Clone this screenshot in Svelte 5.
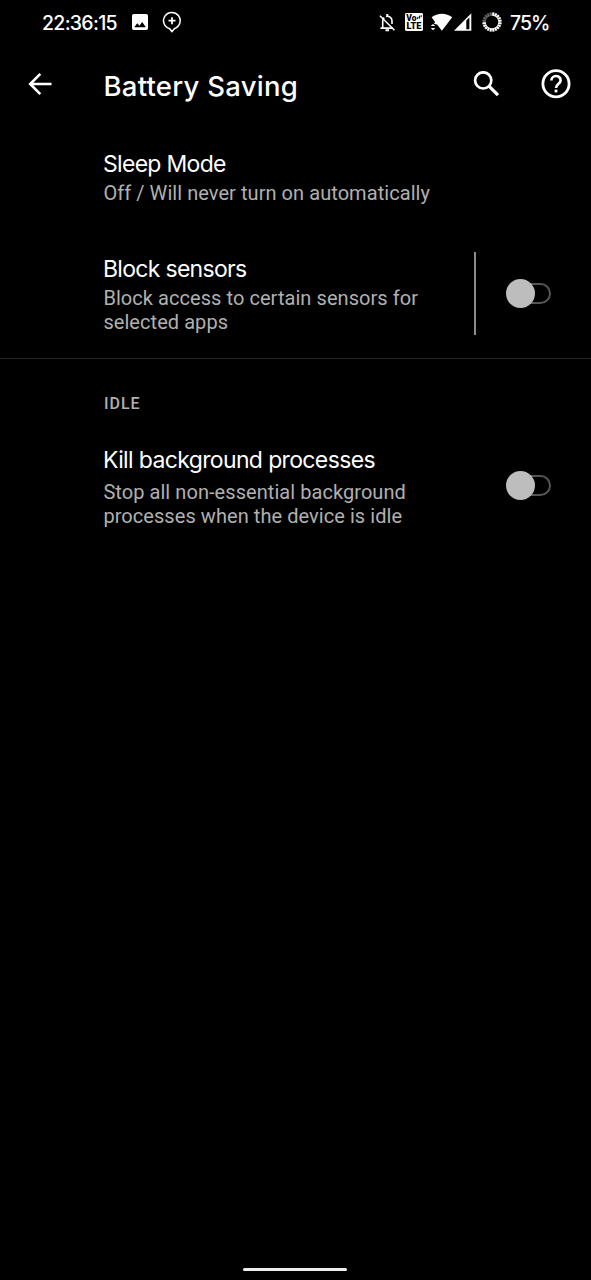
<script>
  let blockSensors = $state(false);
  let killProcesses = $state(false);

  const ticks = Array.from({ length: 20 }, (_, i) => ({ angle: i * 18 + 9, dim: i >= 15 }));
</script>

{#snippet toggle(on, label, flip)}
  <button class="switch" class:on role="switch" aria-checked={on} aria-label={label} onclick={flip}>
    <span class="track"></span>
    <span class="thumb"></span>
  </button>
{/snippet}

<div class="screen">
  <header class="status">
    <span class="clock">22:36:15</span>
    <svg class="photo" width="16" height="16" viewBox="0 0 16 16">
      <path fill="#fff" fill-rule="evenodd" d="M1.8 0h12.4Q16 0 16 1.8v12.4Q16 16 14.2 16H1.8Q0 16 0 14.2V1.8Q0 0 1.8 0ZM2.2 13.2h11.7L10.2 8.1 7.4 11.7 5.3 9.2Z" />
    </svg>
    <svg class="pin" width="20" height="22" viewBox="0 0 20 22" fill="none" stroke="#fff">
      <path stroke-width="1.5" d="M7.6 17.7A8.3 8.3 0 1 1 12.7 17.5L9.9 20.5Z" />
      <path stroke-width="1.8" d="M10 6.2v7M6.5 9.7h7" />
    </svg>
    <span class="gap"></span>
    <svg class="bell" width="17" height="19" viewBox="0 0 17 19" fill="none" stroke="#fff">
      <path stroke-width="1.6" d="M1.5 15.1h12.4M3.7 15V8.2Q3.7 5.9 5.2 4.6M7 3.4Q8.3 3 9.6 3.4 13 4.4 13 8.2V11" />
      <path stroke-width="2" d="M8.3 1v2.5M6.5 17.3h3.6" />
      <path stroke-width="1.5" d="M.9 2.7 15.5 17.2" />
    </svg>
    <svg class="volte" width="18" height="18" viewBox="0 0 18 18">
      <rect width="18" height="18" rx="1.4" fill="#fff" />
      <text x="1.3" y="8" font-size="9" textLength="10.2" lengthAdjust="spacingAndGlyphs">Vo</text>
      <text x="1.5" y="16.2" font-size="9" textLength="15" lengthAdjust="spacingAndGlyphs">LTE</text>
      <path d="M12.3 6l.8-2.2M14.1 5.8l.7-3.2M15.9 4.3l.5-2" stroke="#000" stroke-width="1" />
    </svg>
    <svg class="wifi" width="23" height="19" viewBox="0 0 23 19" fill="#fff">
      <path d="M1.6 4.2Q6.2.7 11.9.7T22.2 4.2L11.9 17.8 7.1 11.6Q5 10.8 3.9 11.1 5 10 4.9 8.7Z" />
      <path d="M.8 13.1 3 10.9l2.2 2.2ZM.8 15 3 17.2 5.2 15Z" />
    </svg>
    <svg class="signal" width="18" height="18" viewBox="0 0 18 18">
      <path fill="#fff" fill-rule="evenodd" d="M0 17.7 17.3.3v17.4ZM12.3 7.6v8.6h3.1V4.5Z" />
    </svg>
    <svg class="ring" width="20" height="20" viewBox="-10 -10 20 20">
      {#each ticks as tick}
        <rect x="-1.05" y="-9.7" width="2.1" height="3.5" fill={tick.dim ? '#666' : '#fff'} transform="rotate({tick.angle})" />
      {/each}
    </svg>
    <span class="percent">75%</span>
  </header>

  <nav class="bar">
    <svg class="back" width="24" height="24" viewBox="0 0 24 24" fill="none" stroke="#fff" stroke-width="2.6">
      <path d="M23.5 12H2.5M12.3 1.9 2.2 12l10.1 10.1" />
    </svg>
    <h1>Battery Saving</h1>
    <svg class="search" width="27" height="27" viewBox="0 0 27 27" fill="none" stroke="#fff">
      <circle cx="10.2" cy="9.4" r="8.1" stroke-width="2.7" />
      <path stroke-width="3.3" d="M15.7 14.9 25 24.2" />
    </svg>
    <svg class="help" width="30" height="30" viewBox="0 0 30 30" fill="none" stroke="#fff">
      <circle cx="15" cy="14.7" r="13.1" stroke-width="2.8" />
      <path stroke-width="2.7" d="M10.4 11.6C10.4 5.5 19.6 5.5 19.6 11.5 19.6 14.7 15 14.8 15 19" />
      <path stroke-width="2.8" d="M15 20.6v2.8" />
    </svg>
  </nav>

  <main>
    <section class="row sleep">
      <div class="copy">
        <h2>Sleep Mode</h2>
        <p>Off / Will never turn on automatically</p>
      </div>
    </section>
    <section class="row sensors">
      <div class="copy">
        <h2>Block sensors</h2>
        <p>Block access to certain sensors for<br />selected apps</p>
      </div>
      <div class="rule"></div>
      {@render toggle(blockSensors, 'Block sensors', () => (blockSensors = !blockSensors))}
    </section>
    <h3>IDLE</h3>
    <section class="row kill">
      <div class="copy">
        <h2>Kill background processes</h2>
        <p>Stop all non-essential background<br />processes when the device is idle</p>
      </div>
      {@render toggle(killProcesses, 'Kill background processes', () => (killProcesses = !killProcesses))}
    </section>
  </main>

  <footer><span class="handle"></span></footer>
</div>

<style>
  :global(body) { margin: 0; background: #000; }
  .screen {
    box-sizing: border-box;
    width: 100%;
    height: 1280px;
    display: flex;
    flex-direction: column;
    overflow: hidden;
    background: #000;
    color: #fff;
    font-family: Roboto, sans-serif;
  }
  h1, h2, h3, p { margin: 0; }
  svg { display: block; flex: none; }
  .status {
    height: 44px;
    display: flex;
    align-items: center;
    padding: 0 41px 0 42px;
    font-family: Inter, sans-serif;
    font-size: 19.5px;
    font-weight: 500;
    white-space: nowrap;
  }
  .clock, .percent { padding-top: 2px; }
  .clock { width: 76px; letter-spacing: -0.7px; }
  .photo { margin-left: 14px; }
  .pin { margin-left: 14px; }
  .gap { flex: 1; }
  .bell { margin-right: 9px; }
  .volte { margin-right: 7px; }
  .volte text { font-family: Roboto, sans-serif; font-weight: 900; letter-spacing: 0; fill: #000; }
  .wifi { margin-right: 1px; }
  .signal { margin-right: 10px; }
  .ring { margin-right: 8px; }
  .percent { width: 40px; letter-spacing: -1px; }

  .bar { height: 80px; display: flex; align-items: center; padding: 0 20px 0 28px; }
  h1 {
    flex: 1;
    margin-left: 51.5px;
    padding-top: 3px;
    font: 500 27.5px/36px Inter, sans-serif;
    letter-spacing: 0.25px;
    white-space: nowrap;
  }
  .search { margin-right: 41px; }

  main { flex: 1; }
  .row { display: flex; padding: 0 40px 0 103px; }
  .copy { flex: 1; white-space: nowrap; }
  h2 { font: 400 23px/30px Inter, sans-serif; letter-spacing: -0.7px; }
  p { margin-top: 2px; padding-left: 0.4px; font-size: 20px; line-height: 24px; letter-spacing: 0.06px; color: #b0b0b0; }
  .sleep { height: 105px; padding-top: 25px; }
  .sensors { height: 104px; border-bottom: 1px solid #262626; }
  .rule { width: 2px; height: 83px; background: #8c8c8c; margin: -2px 30px 0 0; }
  h3 { padding: 34px 0 0 104px; font-size: 16px; line-height: 22px; font-weight: 500; letter-spacing: 1px; color: #b0b0b0; }
  .kill { padding-top: 30px; }
  .kill h2 { letter-spacing: -0.64px; }
  .kill p { margin-top: 5px; }

  .switch {
    display: grid;
    align-items: center;
    width: 45px;
    height: 30px;
    padding: 0;
    border: 0;
    background: none;
  }
  .sensors .switch { margin-top: 24px; }
  .kill .switch { margin-top: 25px; }
  .track, .thumb { grid-area: 1 / 1; box-sizing: border-box; }
  .track { width: 40px; height: 21px; justify-self: end; border: 2px solid #555; border-radius: 11px; }
  .thumb { width: 29px; height: 29px; border-radius: 50%; background: #bdbdbd; }
  .on .track { justify-self: start; }
  .on .thumb { justify-self: end; }

  footer { height: 12px; display: flex; justify-content: center; padding-right: 1px; }
  .handle { width: 104px; height: 3px; border-radius: 2px; background: #eee; }
</style>
